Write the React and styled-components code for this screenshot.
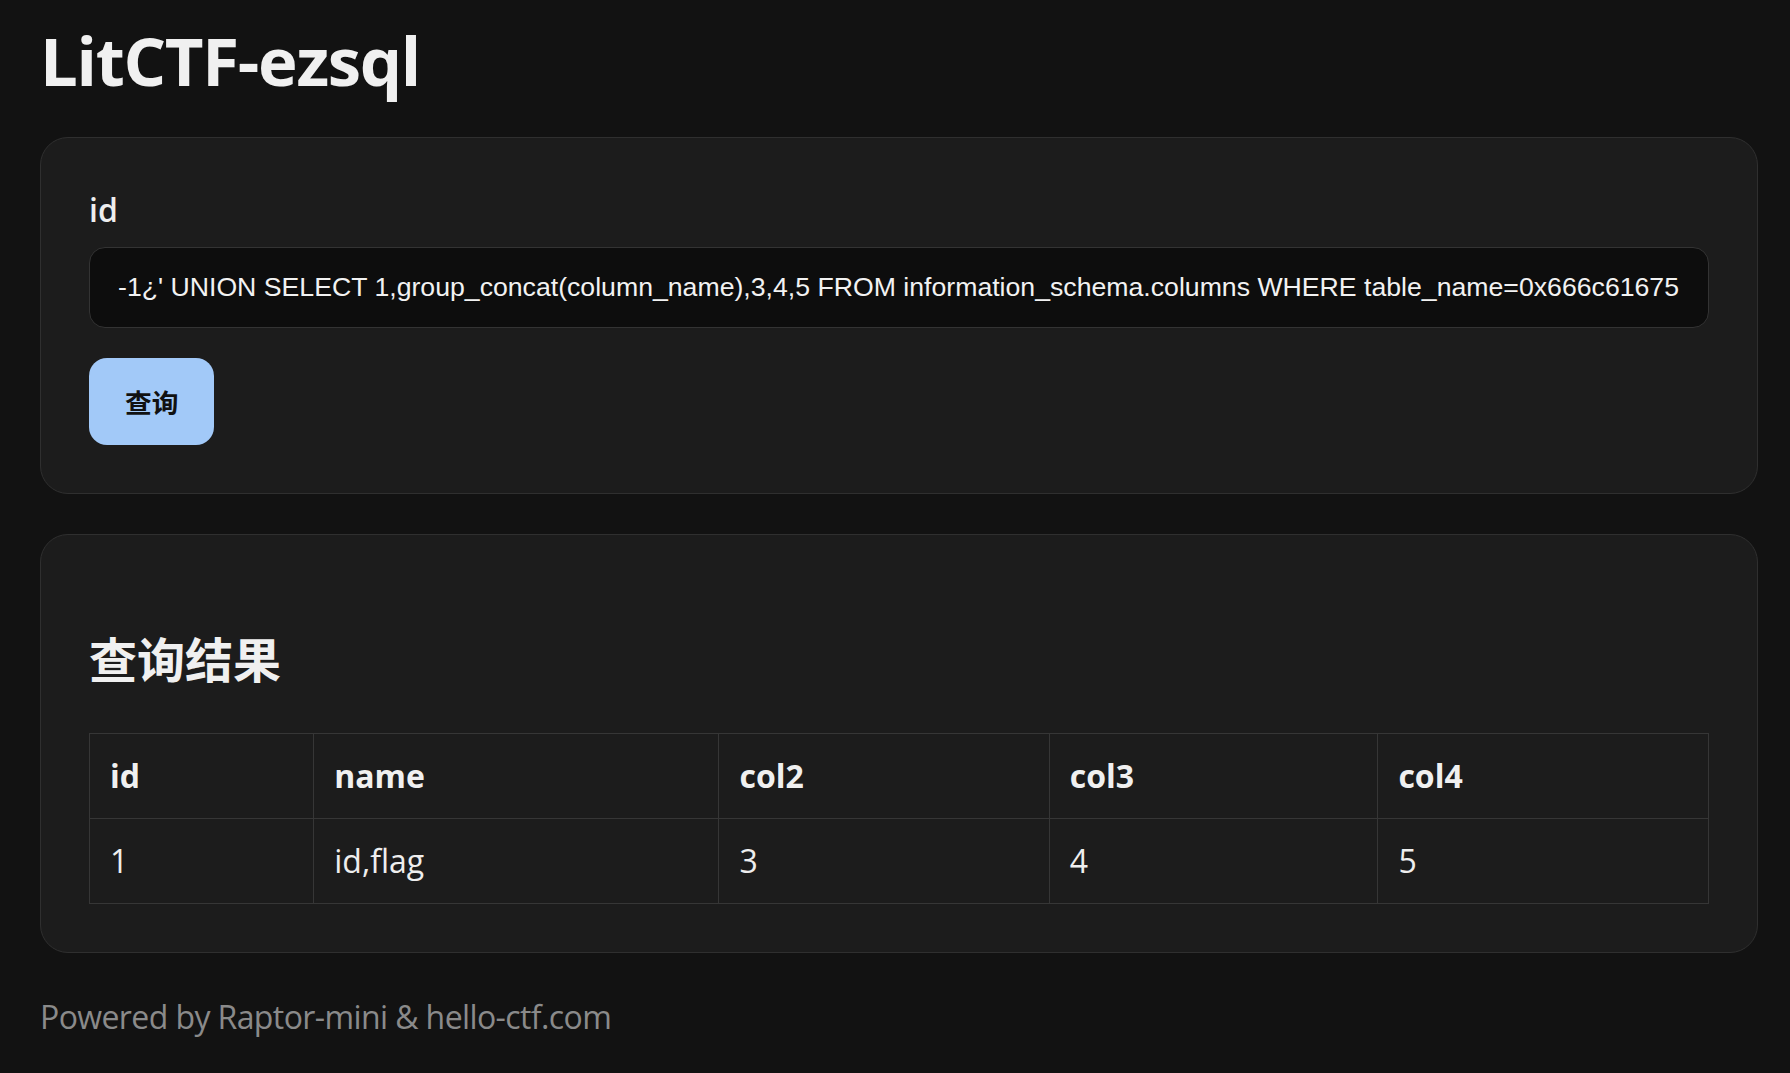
import React from 'react';
import styled, { createGlobalStyle } from 'styled-components';

const GlobalStyle = createGlobalStyle`
  html, body {
    margin: 0;
    padding: 0;
    background: #121212;
  }
  body {
    font-family: "Open Sans", "Noto Sans CJK SC", sans-serif;
    color: #eeeeee;
  }
  * {
    box-sizing: border-box;
  }
`;

const columns = [
  { key: 'id', label: 'id', width: '13.85%' },
  { key: 'name', label: 'name', width: '25.03%' },
  { key: 'col2', label: 'col2', width: '20.4%' },
  { key: 'col3', label: 'col3', width: '20.3%' },
  { key: 'col4', label: 'col4', width: '20.42%' },
];

const rows = [
  { id: '1', name: 'id,flag', col2: '3', col3: '4', col4: '5' },
];

const query = "-1¿' UNION SELECT 1,group_concat(column_name),3,4,5 FROM information_schema.columns WHERE table_name=0x666c61675";

const App = () => {
  return (
    <Page>
      <GlobalStyle />
      <Title>LitCTF-ezsql</Title>

      <Card as="form" onSubmit={(e) => e.preventDefault()}>
        <Label htmlFor="id">id</Label>
        <Input id="id" name="id" defaultValue={query} />
        <SubmitButton type="submit">查询</SubmitButton>
      </Card>

      <Card>
        <ResultTitle>查询结果</ResultTitle>
        <Table>
          <thead>
            <tr>
              {columns.map(col => (
                <Th key={col.key} width={col.width}>{col.label}</Th>
              ))}
            </tr>
          </thead>
          <tbody>
            {rows.map((row, i) => (
              <tr key={i}>
                {columns.map(col => <Td key={col.key}>{row[col.key]}</Td>)}
              </tr>
            ))}
          </tbody>
        </Table>
      </Card>

      <Footer>Powered by Raptor-mini &amp; hello-ctf.com</Footer>
    </Page>
  );
};

const Page = styled.div`
  padding: 20px 32px 40px 40px;
`;
const Title = styled.h1`
  margin: 0 0 37px;
  font-size: 67px;
  line-height: 80px;
  font-weight: 700;
  letter-spacing: -1.3px;
  color: #f0f0f0;
`;
const Card = styled.div`
  display: flex;
  flex-direction: column;
  align-items: flex-start;
  background: #1c1c1c;
  border: 1px solid #2f2f2f;
  border-radius: 28px;
  padding: 48px;
  & + & {
    margin-top: 40px;
  }
`;
// 입력 영역
const Label = styled.label`
  font-size: 32px;
  line-height: 48px;
  font-weight: 600;
  margin-bottom: 13px;
`;
const Input = styled.input`
  width: 100%;
  height: 81px;
  padding: 0 28px;
  background: #0d0d0d;
  border: 1px solid #333333;
  border-radius: 16px;
  color: #f2f2f2;
  font-family: "Liberation Sans", Arial, sans-serif;
  font-size: 26.67px;
  outline: none;
`;
const SubmitButton = styled.button`
  margin-top: 30px;
  height: 87px;
  padding: 0 36px;
  border: none;
  border-radius: 18px;
  background: #a2c9f8;
  color: #111111;
  font-family: "Liberation Sans", "Noto Sans CJK SC", sans-serif;
  font-size: 26.67px;
  font-weight: 700;
  cursor: pointer;
`;
// 결과 테이블
const ResultTitle = styled.h2`
  margin: 48px 0 44px;
  font-size: 48px;
  line-height: 57.6px;
  font-weight: 700;
  color: #f0f0f0;
`;
const Table = styled.table`
  width: 100%;
  border-collapse: collapse;
  table-layout: fixed;
`;
const Th = styled.th`
  width: ${p => p.width};
  padding: 20.5px 20px;
  border: 1px solid #363636;
  text-align: left;
  font-size: 32px;
  line-height: 43px;
  font-weight: 700;
  color: #f0f0f0;
`;
const Td = styled.td`
  padding: 20.5px 20px;
  border: 1px solid #363636;
  font-size: 32px;
  line-height: 43px;
  font-weight: 400;
  color: #eeeeee;
`;
const Footer = styled.div`
  margin-top: 42px;
  font-size: 32px;
  line-height: 43px;
  letter-spacing: -0.6px;
  color: #8a8a8a;
`;

export default App;
